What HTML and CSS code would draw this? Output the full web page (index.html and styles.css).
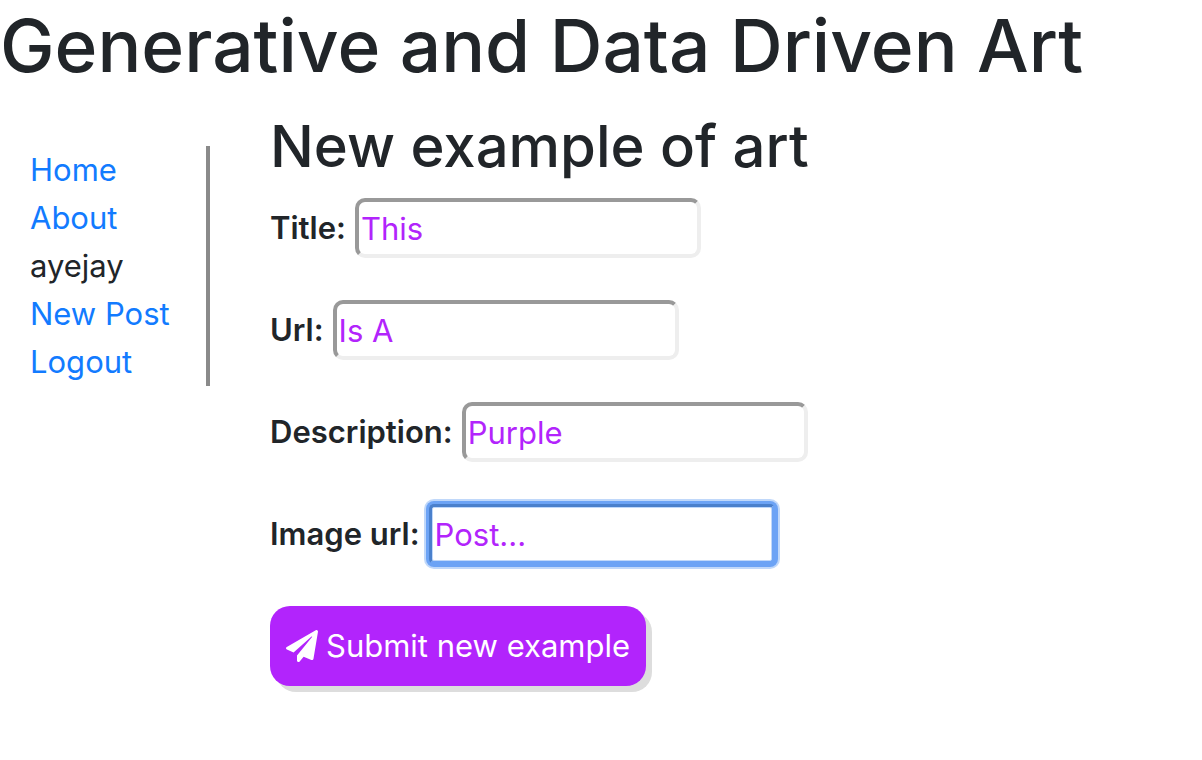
FILE: index.html
```html
<!DOCTYPE html>
<html lang="en">
<head>
<meta charset="utf-8">
<title>Generative and Data Driven Art</title>
<link rel="stylesheet" href="styles.css">
</head>
<body>
<header><h1 class="site-title">Generative and Data Driven Art</h1></header>
<div class="layout">
  <nav class="sidebar">
    <a href="#">Home</a>
    <a href="#">About</a>
    <span>ayejay</span>
    <a href="#">New Post</a>
    <a href="#">Logout</a>
  </nav>
  <main class="content">
    <h2 class="page-title">New example of art</h2>
    <form class="post-form">
      <div class="field"><label for="title">Title:</label><input id="title" type="text" value="This"></div>
      <div class="field"><label for="url">Url:</label><input id="url" type="text" value="Is A"></div>
      <div class="field"><label for="description">Description:</label><input id="description" type="text" value="Purple"></div>
      <div class="field"><label for="image">Image url:</label><input id="image" class="focused" type="text" value="Post..."></div>
      <button class="submit" type="button">
        <svg class="icon" viewBox="0 0 512 512" aria-hidden="true"><path fill="currentColor" d="M476 3.2L12.500 270.600c-18.100 10.400-15.800 35.600 2.200 43.200L121 358.400l287.300-253.200c5.500-4.900 13.300 2.600 8.600 8.300L176 407v80.500c0 23.600 28.500 32.900 42.500 15.800L282 426l124.600 52.200c14.200 6 30.400-2.900 33-18.200l72-432C515 7.800 493.300-6.800 476 3.200z"/></svg>
        <span>Submit new example</span>
      </button>
    </form>
  </main>
</div>
</body>
</html>
```

FILE: styles.css
```css
* {
  box-sizing: border-box;
}

body {
  margin: 0;
  background: #fff;
  color: #212529;
  font-family: Inter, "Liberation Sans", sans-serif;
  font-size: 31px;
  line-height: 48px;
}

h1,
h2 {
  margin: 0;
  font-weight: 500;
}

.site-title {
  font-size: 73px;
  line-height: 92px;
}

.layout {
  display: flex;
  align-items: flex-start;
  gap: 60px;
  padding: 16px 0 32px;
}

.sidebar {
  display: flex;
  flex-direction: column;
  width: 210px;
  margin-top: 38px;
  padding-left: 30px;
  border-right: 4px solid #8a8a8a;
}

.sidebar a {
  color: #127bff;
  text-decoration: none;
}

.content {
  flex: 1;
}

.page-title {
  font-size: 58px;
  line-height: 76px;
  margin-bottom: 14px;
}

.post-form {
  display: flex;
  flex-direction: column;
  align-items: flex-start;
  gap: 42px;
}

.field {
  display: flex;
  align-items: center;
  gap: 9px;
}

.field label {
  font-weight: 600;
}

.field input {
  width: 346px;
  height: 60px;
  padding: 2px;
  border: 4px solid;
  border-color: #999 #eee #eee #999;
  border-radius: 10px;
  background: #fff;
  color: #b224fc;
  font: inherit;
}

.field .focused {
  border-width: 3px;
  border-color: #4a80cc #6ca3f5 #6ca3f5 #4a80cc;
  border-radius: 5px;
  padding: 3px;
  outline: 0;
  box-shadow: inset 0 0 0 1px #c0d8fa, 0 0 0 3px #6ca3f5, 0 0 0 5px #c0d8fa;
}

.submit {
  display: flex;
  align-items: center;
  gap: 8px;
  height: 80px;
  padding: 0 16px;
  border: 0;
  border-radius: 20px;
  background: #b224fc;
  box-shadow: 6px 6px 0 #ddd;
  color: #fff;
  font: inherit;
}

.icon {
  width: 32px;
  height: 32px;
}
```
